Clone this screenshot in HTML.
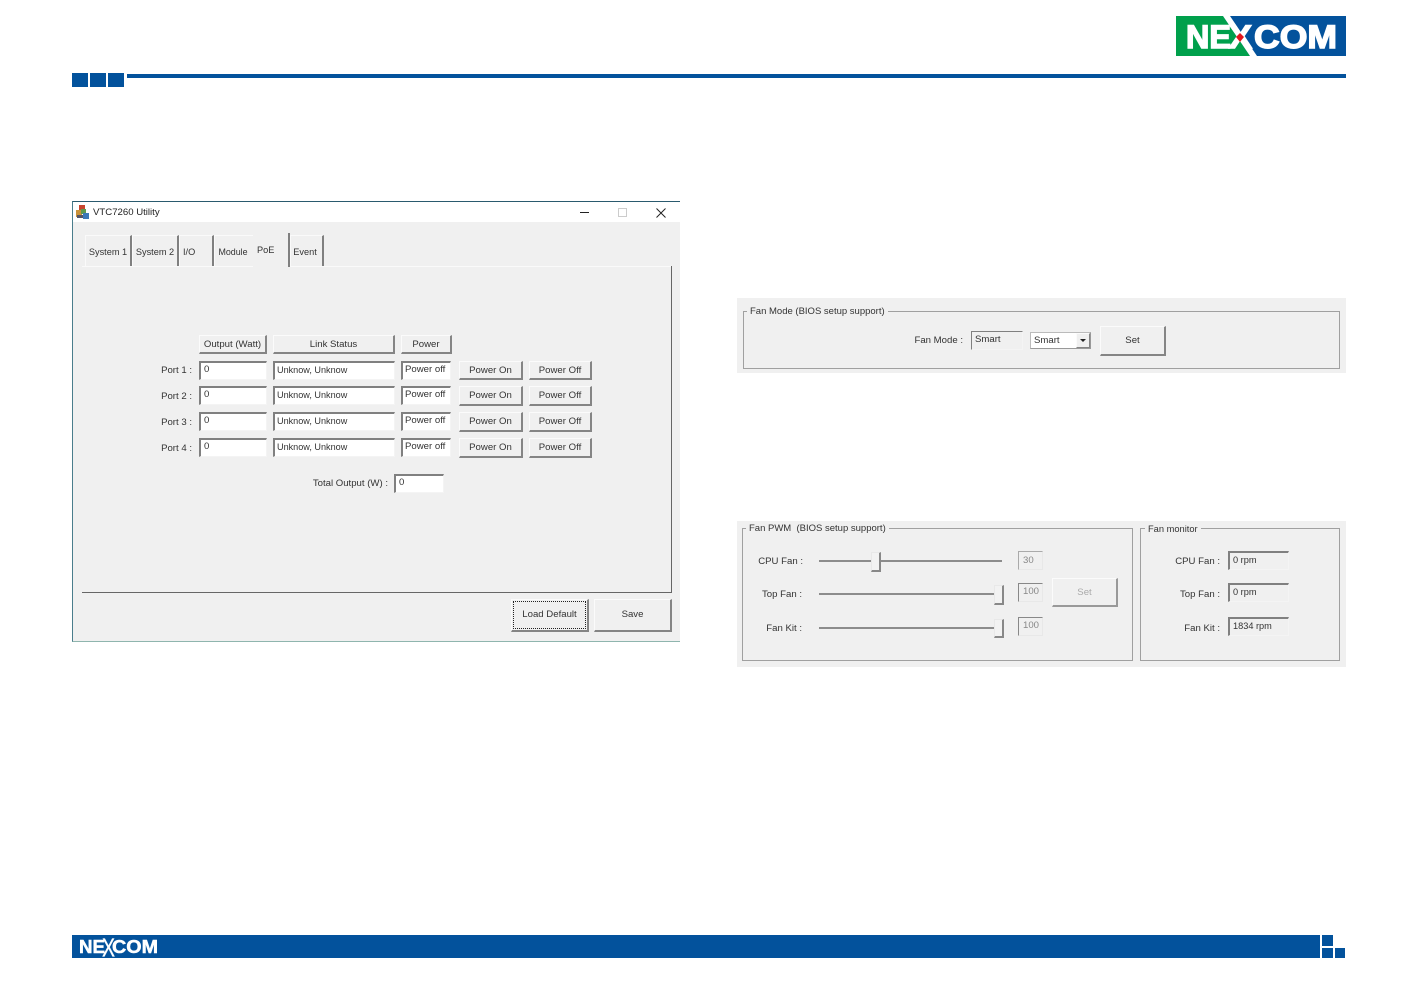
<!DOCTYPE html>
<html><head><meta charset="utf-8"><style>
html,body{margin:0;padding:0;background:#fff}
body{width:1417px;height:998px;position:relative;overflow:hidden;font-family:"Liberation Sans",sans-serif;font-size:9.6px;color:#333}
#w{position:absolute;left:0;top:0;width:1417px;height:998px;filter:blur(.35px)}
div,svg{position:absolute;box-sizing:border-box}
.bl{background:#03529c}
.t{white-space:nowrap;line-height:12px}
.r{text-align:right}
.b{background:#f0f0f0;border:1px solid;border-color:#fbfbfb #858585 #858585 #fbfbfb;border-width:1px 2px 2px 1px;text-align:center;white-space:nowrap;color:#333}
.f{background:#fff;border:1px solid;border-color:#808080 #f4f4f4 #f4f4f4 #808080;border-width:2px 1px 1px 2px;padding:1px 0 0 3px;line-height:12px;white-space:nowrap;color:#333}
.u{font-size:9.1px;padding-left:2px}
.p{padding-left:2px}
.m{background:#f0f0f0;font-size:9.2px;padding:0 0 0 3px}
.g{background:#f0f0f0}
.tab{background:#f0f0f0;border-right:2px solid #808080;border-top:1px solid #fafafa;border-left:1px solid #fafafa;text-align:center;line-height:32px;white-space:nowrap;top:235px;height:31px;font-size:9.2px}
.gr{border:1px solid #a0a0a0}
.lg{background:#f0f0f0;padding:0 3px;line-height:12px;white-space:nowrap;color:#333;font-size:9.5px}
.tr{background:#8c8c8c;height:2px;left:819px;width:183px}
.th{background:#f2f2f2;border-right:2px solid #888;border-bottom:2px solid #888;border-top:1px solid #e8e8e8;border-left:1px solid #e8e8e8}
.d{background:#f0f0f0;border-width:1px;border-color:#888 #e8e8e8 #e8e8e8 #888;color:#888;padding:2px 0 0 4px}
</style></head><body><div id="w">

<!-- header -->
<svg style="left:1176px;top:16px" width="170" height="41" viewBox="0 0 170 41">
<rect width="170" height="40" fill="#03529c"/>
<polygon points="0,0 47,0 74,40 0,40" fill="#00a04c"/>
<polygon points="47,0 54,0 81,40 74,40" fill="#fff"/>
<g font-family="Liberation Sans,sans-serif" font-weight="700" font-size="32" fill="#fff" stroke="#fff" stroke-width="1.4">
<text x="10" y="32" textLength="45" lengthAdjust="spacingAndGlyphs">NE</text>
<text x="53" y="32" textLength="23" lengthAdjust="spacingAndGlyphs">X</text>
<text x="78" y="32" textLength="83" lengthAdjust="spacingAndGlyphs">COM</text>
</g>
<polygon points="64,17 68,21 64,26 60,21" fill="#e3161c"/>
</svg>
<div class="bl" style="left:72px;top:73px;width:16px;height:14px"></div>
<div class="bl" style="left:90px;top:73px;width:16px;height:14px"></div>
<div class="bl" style="left:108px;top:73px;width:16px;height:14px"></div>
<div class="bl" style="left:127px;top:74px;width:1219px;height:4px"></div>

<!-- window -->
<div class="g" style="left:72px;top:201px;width:608px;height:441px;border-top:1px solid #2a5a6e;border-left:1px solid #4a7d8c;border-bottom:1px solid #8fb5ae"></div>
<div style="left:73px;top:202px;width:607px;height:20px;background:#fff"></div>
<svg style="left:75px;top:205px" width="15" height="14">
<rect x="4" y="0" width="6" height="6" fill="#c8452e"/><rect x="1" y="5" width="6" height="7" fill="#c9923a"/><rect x="6" y="4" width="5" height="5" fill="#5f9a4e"/><rect x="8" y="8" width="6" height="6" fill="#3c78b8"/><rect x="2" y="10" width="6" height="3" fill="#556"/>
</svg>
<div class="t" style="left:93px;top:206px;color:#222;line-height:13px">VTC7260 Utility</div>
<div style="left:580px;top:212px;width:9px;height:1px;background:#222"></div>
<div style="left:618px;top:208px;width:9px;height:9px;border:1px solid #ccc"></div>
<svg style="left:656px;top:208px" width="10" height="10"><path d="M.5.5l9 9M9.5.5l-9 9" stroke="#222" stroke-width="1" fill="none"/></svg>

<!-- tabs -->
<div class="tab" style="left:85px;width:47px">System 1</div>
<div class="tab" style="left:132px;width:47px">System 2</div>
<div class="tab" style="left:179px;width:35px;text-align:left;padding-left:3px">I/O</div>
<div class="tab" style="left:214px;width:39px;border-right:none;font-size:8.9px;padding-right:2px">Module</div>
<div class="tab" style="left:253px;top:233px;width:37px;height:34px;border:none;border-right:2px solid #808080;line-height:34px;text-align:left;padding-left:4px">PoE</div>
<div class="tab" style="left:290px;width:34px;padding-right:3px">Event</div>

<!-- panel -->
<div style="left:82px;top:266px;width:171px;height:1px;background:#fafafa"></div>
<div style="left:290px;top:266px;width:382px;height:1px;background:#fafafa"></div>
<div style="left:671px;top:266px;width:1px;height:327px;background:#666"></div>
<div style="left:82px;top:592px;width:590px;height:1px;background:#666"></div>

<div class="b" style="left:199px;top:335px;width:68px;height:19px;line-height:17px">Output (Watt)</div>
<div class="b" style="left:273px;top:335px;width:122px;height:19px;line-height:17px">Link Status</div>
<div class="b" style="left:401px;top:335px;width:51px;height:19px;line-height:17px">Power</div>

<!-- rows -->
<div class="t r" style="left:140px;top:365px;width:52px">Port 1 :</div>
<div class="f" style="left:199px;top:361px;width:68px;height:19px">0</div>
<div class="f u" style="left:273px;top:361px;width:122px;height:19px">Unknow, Unknow</div>
<div class="f p" style="left:401px;top:361px;width:50px;height:19px">Power off</div>
<div class="b" style="left:459px;top:361px;width:64px;height:19px;line-height:17px">Power On</div>
<div class="b" style="left:529px;top:361px;width:63px;height:19px;line-height:17px">Power Off</div>

<div class="t r" style="left:140px;top:391px;width:52px">Port 2 :</div>
<div class="f" style="left:199px;top:386px;width:68px;height:19px">0</div>
<div class="f u" style="left:273px;top:386px;width:122px;height:19px">Unknow, Unknow</div>
<div class="f p" style="left:401px;top:386px;width:50px;height:19px">Power off</div>
<div class="b" style="left:459px;top:386px;width:64px;height:20px;line-height:17px">Power On</div>
<div class="b" style="left:529px;top:386px;width:63px;height:20px;line-height:17px">Power Off</div>

<div class="t r" style="left:140px;top:417px;width:52px">Port 3 :</div>
<div class="f" style="left:199px;top:412px;width:68px;height:19px">0</div>
<div class="f u" style="left:273px;top:412px;width:122px;height:19px">Unknow, Unknow</div>
<div class="f p" style="left:401px;top:412px;width:50px;height:19px">Power off</div>
<div class="b" style="left:459px;top:412px;width:64px;height:20px;line-height:17px">Power On</div>
<div class="b" style="left:529px;top:412px;width:63px;height:20px;line-height:17px">Power Off</div>

<div class="t r" style="left:140px;top:443px;width:52px">Port 4 :</div>
<div class="f" style="left:199px;top:438px;width:68px;height:19px">0</div>
<div class="f u" style="left:273px;top:438px;width:122px;height:19px">Unknow, Unknow</div>
<div class="f p" style="left:401px;top:438px;width:50px;height:19px">Power off</div>
<div class="b" style="left:459px;top:438px;width:64px;height:20px;line-height:17px">Power On</div>
<div class="b" style="left:529px;top:438px;width:63px;height:20px;line-height:17px">Power Off</div>

<div class="t r" style="left:280px;top:478px;width:108px">Total Output (W) :</div>
<div class="f" style="left:394px;top:474px;width:50px;height:19px">0</div>

<div class="b" style="left:511px;top:599px;width:78px;height:33px;line-height:30px">Load Default</div>
<div style="left:513px;top:601px;width:73px;height:28px;border:1px dotted #222"></div>
<div class="b" style="left:594px;top:599px;width:78px;height:33px;line-height:30px">Save</div>

<!-- Fan Mode panel -->
<div class="g" style="left:737px;top:298px;width:609px;height:75px"></div>
<div class="gr" style="left:743px;top:311px;width:597px;height:58px"></div>
<div class="lg" style="left:747px;top:306px">Fan Mode (BIOS setup support)</div>
<div class="t r" style="left:890px;top:335px;width:73px">Fan Mode :</div>
<div class="f" style="left:971px;top:331px;width:52px;height:19px;background:#f0f0f0;border-width:1px;padding:2px 0 0 3px">Smart</div>
<div class="f" style="left:1030px;top:332px;width:61px;height:17px;border-width:1px;border-color:#bbb #999 #999 #bbb;line-height:13px;padding:1px 0 0 3px">Smart</div>
<div class="b" style="left:1076px;top:333px;width:14px;height:15px;border-width:1px"></div>
<svg style="left:1080px;top:339px" width="7" height="4"><path d="M0 0h6L3 3z" fill="#222"/></svg>
<div class="b" style="left:1100px;top:326px;width:66px;height:30px;line-height:27px">Set</div>

<!-- Fan PWM panel -->
<div class="g" style="left:737px;top:521px;width:609px;height:146px"></div>
<div class="gr" style="left:742px;top:528px;width:391px;height:133px"></div>
<div class="gr" style="left:1140px;top:528px;width:200px;height:133px"></div>
<div class="lg" style="left:746px;top:523px">Fan PWM&nbsp; (BIOS setup support)</div>
<div class="lg" style="left:1145px;top:523px;font-size:9.3px">Fan monitor</div>

<div class="t r" style="left:740px;top:556px;width:63px">CPU Fan :</div>
<div class="t r" style="left:740px;top:589px;width:62px">Top Fan :</div>
<div class="t r" style="left:740px;top:623px;width:62px">Fan Kit :</div>

<div class="tr" style="top:560px"></div>
<div class="tr" style="top:593px"></div>
<div class="tr" style="top:627px"></div>
<div class="th" style="left:871px;top:552px;width:10px;height:20px"></div>
<div class="th" style="left:994px;top:585px;width:10px;height:20px"></div>
<div class="th" style="left:994px;top:619px;width:10px;height:19px"></div>

<div class="f d" style="left:1018px;top:551px;width:25px;height:19px;border-color:#aaa #e8e8e8 #e8e8e8 #aaa;padding-top:3px">30</div>
<div class="f d" style="left:1018px;top:583px;width:25px;height:19px">100</div>
<div class="f d" style="left:1018px;top:617px;width:25px;height:19px">100</div>
<div class="b" style="left:1052px;top:578px;width:66px;height:29px;line-height:27px;color:#aaa;border-color:#fbfbfb #999 #999 #fbfbfb">Set</div>

<div class="t r" style="left:1160px;top:556px;width:60px">CPU Fan :</div>
<div class="t r" style="left:1160px;top:589px;width:60px">Top Fan :</div>
<div class="t r" style="left:1160px;top:623px;width:60px">Fan Kit :</div>
<div class="f m" style="left:1228px;top:551px;width:61px;height:19px;padding-top:1px">0 rpm</div>
<div class="f m" style="left:1228px;top:583px;width:61px;height:19px;padding-top:1px">0 rpm</div>
<div class="f m" style="left:1228px;top:617px;width:61px;height:19px;padding-top:1px">1834 rpm</div>

<!-- footer -->
<div class="bl" style="left:72px;top:935px;width:1248px;height:23px"></div>
<svg style="left:72px;top:935px" width="100" height="24">
<g font-family="Liberation Sans,sans-serif" font-weight="700" font-size="18" fill="#fff" stroke="#fff" stroke-width=".5">
<text x="7" y="18" textLength="26" lengthAdjust="spacingAndGlyphs">NE</text>
<text x="40" y="18" textLength="46" lengthAdjust="spacingAndGlyphs">COM</text>
</g>
<text x="30" y="21.500" font-family="Liberation Sans,sans-serif" font-size="26" fill="#fff" stroke="#fff" stroke-width=".3" textLength="13" lengthAdjust="spacingAndGlyphs">X</text>
</svg>
<div class="bl" style="left:1322px;top:935px;width:11px;height:11px"></div>
<div class="bl" style="left:1322px;top:948px;width:11px;height:10px"></div>
<div class="bl" style="left:1335px;top:948px;width:10px;height:10px"></div>
</div></body></html>
